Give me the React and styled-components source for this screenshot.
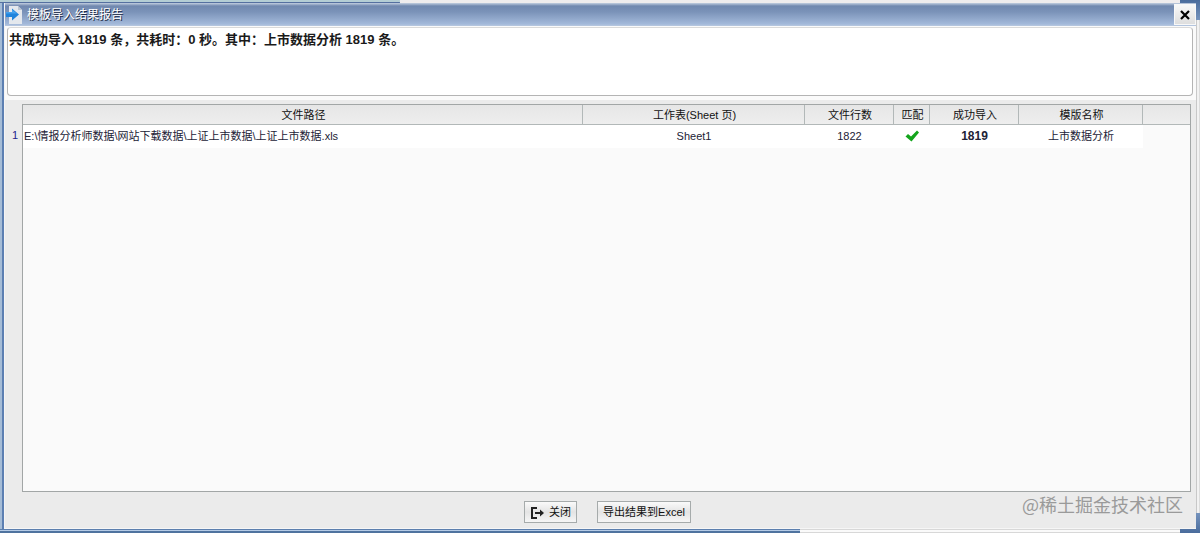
import React from "react";
import styled, { createGlobalStyle } from "styled-components";

const GlobalStyle = createGlobalStyle`
  * { box-sizing: border-box; }
  body {
    margin: 0;
    font-family: "Liberation Sans", "Noto Sans CJK SC", sans-serif;
    font-size: 11px;
    color: #111;
  }
  button, textarea { font: inherit; color: inherit; }
`;

const Desktop = styled.div`
  display: flex;
  min-height: 100vh;
  padding: 3px 4px 4px;
  background:
    linear-gradient(#4a6c9c, #7593bd) right top / 20px 20px no-repeat,
    linear-gradient(#7593bd, #4a6c9c) right bottom / 20px 20px no-repeat,
    linear-gradient(#b4cdd4 0 2px, #5570a0 2px) left top / 33.33% 3px no-repeat,
    linear-gradient(#5c7fae 0 1px, #b5cbe6 1px 2px, #4f739f 2px) left bottom / 66.67% 4px no-repeat,
    linear-gradient(90deg, #a5bcd6 0 2px, #5c7fb2 2px) left top / 4px 100% no-repeat,
    linear-gradient(90deg, #c8c8c8 0 1px, #f2f2f2 1px 3px, #dcdcdc 3px) right top / 4px 100% no-repeat,
    linear-gradient(#d8d8d8 0 1px, #fafafa 1px 3px, #d8d8d8 3px) right bottom / 50% 4px no-repeat,
    #efeced;
`;

const Dialog = styled.main`
  flex: 1;
  display: flex;
  flex-direction: column;
  min-width: 0;
  background: #ebebeb;
  border-left: 1px solid #f4f4f4;
  border-bottom: 1px solid #f6f6f6;
`;

const TitleBar = styled.header`
  display: flex;
  align-items: center;
  height: 23px;
  background: linear-gradient(#c3cfe0 0, #7188af 3px, #7b93b9 9px, #a3b9da 21px, #b9c9df);
`;

const TitleIcon = styled.svg`
  width: 18px;
  height: 20px;
`;

const Title = styled.h1`
  flex: 1;
  margin: 0 0 0 4px;
  font-size: 12px;
  line-height: 22px;
  font-weight: 400;
  color: #fff;
  text-shadow: 1px 1px 0 #1c2a44;
`;

const CloseBox = styled.button`
  display: grid;
  place-items: center;
  width: 22px;
  height: 21px;
  padding: 0;
  border: 1px solid #f8f8f8;
  background: linear-gradient(#f8f8f8, #dedede);
`;

const SummaryArea = styled.section`
  display: flex;
  padding: 1px 3px 4px 2px;
  background: #fafafa;
`;

const Summary = styled.textarea`
  flex: 1;
  height: 69px;
  padding: 2px 1px;
  border: 1px solid #b4b4b4;
  border-top-color: #dadada;
  border-radius: 4px;
  background: #fff;
  outline: none;
  resize: none;
  font-size: 13px;
  line-height: 20px;
  font-weight: 700;
  color: #1a1a1a;
`;

const Results = styled.section`
  flex: 1;
  display: flex;
  padding: 4px 5px 0 0;
`;

const RowNumbers = styled.div`
  width: 17px;
  padding: 21px 4px 0 0;
  text-align: right;
  line-height: 21px;
  color: #22228c;
`;

const Grid = styled.div`
  flex: 1;
  min-width: 0;
  border: 1px solid #a2a6a6;
  background: #fafafa;
`;

const Table = styled.table`
  width: 100%;
  table-layout: fixed;
  border-collapse: separate;
  border-spacing: 0;
`;

const Col = styled.col`
  width: ${(p) => p.$width};
`;

const HeadCell = styled.th`
  height: 20px;
  padding: 2px 0 0 2px;
  border-right: 1px solid #b2b8b8;
  border-bottom: 1px solid #b2b8b8;
  background: linear-gradient(#e6e6e6, #eeeeee);
  font-weight: 400;
  line-height: 17px;
  white-space: nowrap;
  &:last-child { border-right: 0; }
`;

const Cell = styled.td`
  height: 23px;
  padding: 0 1px 1px;
  background: ${(p) => (p.$blank ? "transparent" : "#fff")};
  text-align: ${(p) => (p.$left ? "left" : "center")};
  line-height: 21px;
  white-space: nowrap;
  color: #222236;
  font-size: ${(p) => (p.$strong ? "12px" : "11px")};
  font-weight: ${(p) => (p.$strong ? 700 : 400)};
`;

const CheckIcon = styled.svg`
  display: block;
  width: 14px;
  height: 12px;
  margin: 0 auto;
`;

const Footer = styled.footer`
  position: relative;
  display: flex;
  justify-content: center;
  gap: 20px;
  padding: 9px 0 5px;
  margin-left: 14px;
`;

const ActionButton = styled.button`
  display: flex;
  align-items: center;
  gap: 4px;
  height: 22px;
  padding: 1px 5px 0;
  border: 1px solid #a6abab;
  background: linear-gradient(#fafafa, #e4e4e4 50%, #f6f6f6);
  line-height: 19px;
  white-space: nowrap;
`;

const Watermark = styled.div`
  position: absolute;
  right: 13px;
  bottom: 11px;
  font-size: 18px;
  line-height: 26px;
  font-family: "Noto Sans CJK SC", sans-serif;
  font-weight: 400;
  color: #9a9a9a;
`;

const columns = [
  { label: "文件路径", width: "auto" },
  { label: "工作表(Sheet 页)", width: "222px" },
  { label: "文件行数", width: "89px" },
  { label: "匹配", width: "36px" },
  { label: "成功导入", width: "89px" },
  { label: "模版名称", width: "124px" },
  { label: "", width: "47px" },
];

const rows = [
  {
    path: "E:\\情报分析师数据\\网站下载数据\\上证上市数据\\上证上市数据.xls",
    sheet: "Sheet1",
    lines: 1822,
    imported: 1819,
    template: "上市数据分析",
  },
];

export default function App() {
  return (
    <>
      <GlobalStyle />
      <Desktop>
        <Dialog>
          <TitleBar>
            <TitleIcon viewBox="0 0 18 20" aria-hidden="true">
              <path d="M4 1h9l4 4v14H4z" fill="#e4e8ed" />
              <path d="M13 1v4h4z" fill="#bcc6d2" />
              <path d="M1 7h6V3.500l7 6-7 6V12H1z" fill="#2084dc" />
              <path d="M1 7h6V4.500l5 4H1z" fill="#45a2ee" />
            </TitleIcon>
            <Title>模板导入结果报告</Title>
            <CloseBox type="button" aria-label="关闭窗口">
              <svg width="10" height="10" viewBox="0 0 10 10">
                <path d="M1 1l8 8M9 1L1 9" stroke="#000" strokeWidth="2.200" />
              </svg>
            </CloseBox>
          </TitleBar>
          <SummaryArea>
            <Summary
              readOnly
              aria-label="导入结果"
              value="共成功导入 1819 条，共耗时：0 秒。其中：上市数据分析 1819 条。"
            />
          </SummaryArea>
          <Results>
            <RowNumbers>
              {rows.map((row, i) => (
                <div key={row.path}>{i + 1}</div>
              ))}
            </RowNumbers>
            <Grid>
              <Table>
                <colgroup>
                  {columns.map((c) => (
                    <Col key={c.label} $width={c.width} />
                  ))}
                </colgroup>
                <thead>
                  <tr>
                    {columns.map((c) => (
                      <HeadCell key={c.label} scope="col">{c.label}</HeadCell>
                    ))}
                  </tr>
                </thead>
                <tbody>
                  {rows.map((row) => (
                    <tr key={row.path}>
                      <Cell $left>{row.path}</Cell>
                      <Cell>{row.sheet}</Cell>
                      <Cell>{row.lines}</Cell>
                      <Cell>
                        <CheckIcon viewBox="0 0 14 12" role="img" aria-label="匹配">
                          <path d="M0.500 6.500l2.500-2.500L6 6.500 12 0.500l2 2L6.500 11.500z" fill="#14a51c" />
                        </CheckIcon>
                      </Cell>
                      <Cell $strong>{row.imported}</Cell>
                      <Cell>{row.template}</Cell>
                      <Cell $blank />
                    </tr>
                  ))}
                </tbody>
              </Table>
            </Grid>
          </Results>
          <Footer>
            <ActionButton type="button">
              <svg width="15" height="12" viewBox="0 0 15 12" aria-hidden="true">
                <path d="M7 1H2v10h5" fill="none" stroke="#222" strokeWidth="2" />
                <path d="M5 6h6" stroke="#222" strokeWidth="2" />
                <path d="M10 2.500L14 6l-4 3.500z" fill="#222" />
              </svg>
              关闭
            </ActionButton>
            <ActionButton type="button">导出结果到Excel</ActionButton>
            <Watermark>@稀土掘金技术社区</Watermark>
          </Footer>
        </Dialog>
      </Desktop>
    </>
  );
}
